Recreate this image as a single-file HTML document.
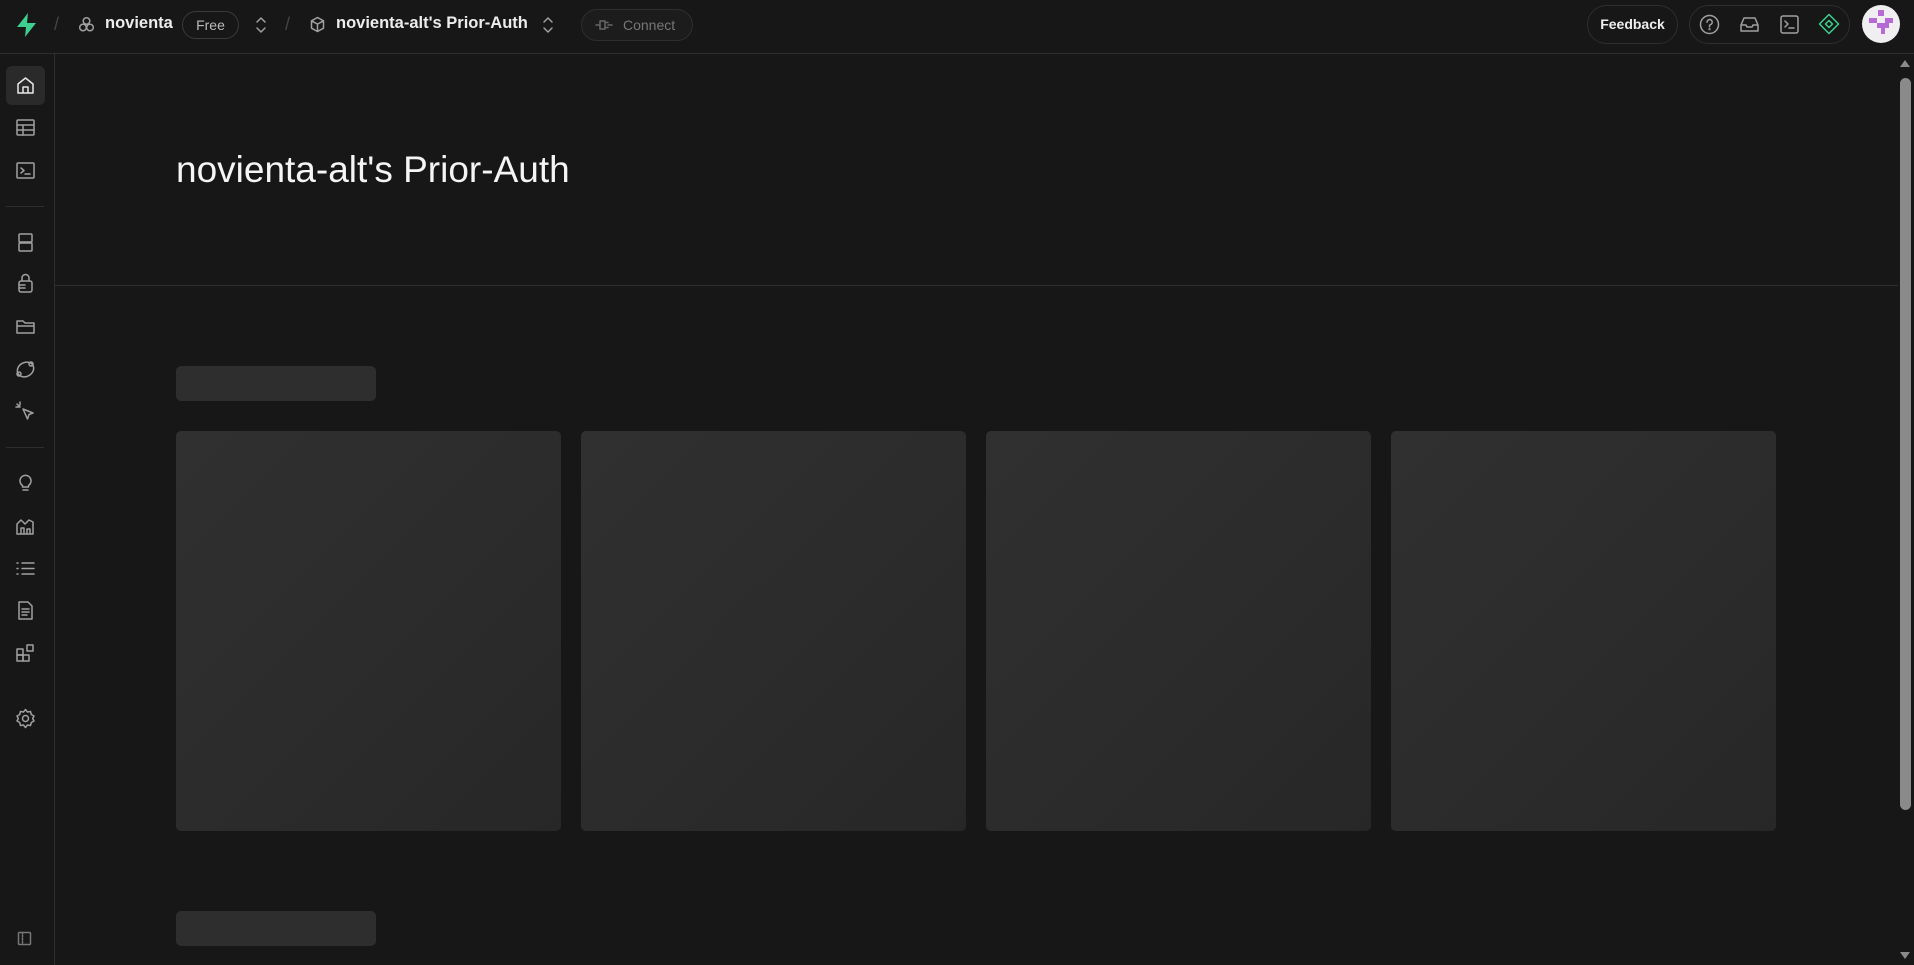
<!DOCTYPE html>
<html><head><meta charset="utf-8"><style>
*{box-sizing:border-box;margin:0;padding:0}
body{width:1914px;height:965px;background:#171717;font-family:"Liberation Sans",sans-serif;color:#ededed;position:relative;overflow:hidden}
.top{position:absolute;left:0;top:0;width:1914px;height:54px;border-bottom:1px solid #2e2e2e}
.abs{position:absolute}
.side{position:absolute;left:0;top:54px;width:55px;height:911px;border-right:1px solid #2e2e2e}
svg.i{position:absolute;fill:none;stroke:#a0a0a0;stroke-width:1.5;stroke-linecap:round;stroke-linejoin:round}
.sep{position:absolute;left:6px;width:38px;height:1px;background:#2e2e2e}
.card{position:absolute;top:431px;width:385px;height:400px;border-radius:5px;background:linear-gradient(135deg,#303030 0%,#2c2c2c 50%,#272727 100%)}
.bar{position:absolute;left:176px;width:200px;height:35px;border-radius:5px;background:#2e2e2e}
</style></head><body>
<div class="top">
<svg class="abs" style="left:15px;top:13px" width="23" height="24" viewBox="0 0 23 24"><path d="M13 0 L2 14 H11 L10 24 L21 10 H12 Z" fill="#3ecf8e"/></svg>
<div class="abs" style="left:54px;top:14px;color:#444;font-size:18px">/</div>
<svg class="i" style="left:78px;top:16px" width="17" height="17" viewBox="0 0 17 17" ><circle cx="8.5" cy="5" r="3.3"/><circle cx="5" cy="11.5" r="3.3"/><circle cx="12" cy="11.5" r="3.3"/></svg>
<div class="abs" style="left:105px;top:14px;font-size:16.5px;font-weight:bold">novienta</div>
<div class="abs" style="left:182px;top:11px;width:57px;height:28px;border:1px solid #3a3a3a;border-radius:14px;font-size:14px;color:#bbb;text-align:center;line-height:26px">Free</div>
<svg class="i" style="left:254px;top:16px" width="14" height="18" viewBox="0 0 14 18"><path d="M3 6l4-4 4 4M3 12l4 4 4-4"/></svg>
<div class="abs" style="left:285px;top:14px;color:#444;font-size:18px">/</div>
<svg class="i" style="left:309px;top:16px" width="17" height="17" viewBox="0 0 17 17"><path d="M8.5 1.5l6 3.3v7.4l-6 3.3-6-3.3V4.8zM2.5 4.8l6 3.3 6-3.3M8.5 8.1v7.4"/></svg>
<div class="abs" style="left:336px;top:14px;font-size:16.5px;font-weight:bold">novienta-alt's Prior-Auth</div>
<svg class="i" style="left:541px;top:16px" width="14" height="18" viewBox="0 0 14 18"><path d="M3 6l4-4 4 4M3 12l4 4 4-4"/></svg>
<div class="abs" style="left:581px;top:9px;width:112px;height:32px;border:1px solid #2e2e2e;background:#1c1c1c;border-radius:16px;font-size:14px;color:#777;line-height:30px;padding-left:41px">Connect</div>
<svg class="i" style="left:595px;top:18px;stroke:#666" width="18" height="14" viewBox="0 0 18 14"><path d="M1 7h4M13 7h4M5 3h5v8H5zM10 4.5h3M10 9.5h3"/></svg>
<div class="abs" style="left:1587px;top:5px;width:91px;height:39px;border:1px solid #2e2e2e;border-radius:20px;font-size:14px;font-weight:bold;text-align:center;line-height:37px">Feedback</div>
<div class="abs" style="left:1689px;top:5px;width:161px;height:39px;border:1px solid #2e2e2e;border-radius:20px"></div>
<svg class="i" style="left:1699px;top:14px" width="21" height="21" viewBox="0 0 21 21"><circle cx="10.5" cy="10.5" r="9"/><path d="M8 8.2a2.6 2.6 0 1 1 3.5 2.4c-.7.3-1 .8-1 1.5v.6"/><circle cx="10.5" cy="15.2" r=".4"/></svg>
<svg class="i" style="left:1739px;top:14px" width="21" height="21" viewBox="0 0 21 21"><path d="M2 11l3-7h11l3 7v6H2zM2 11h5l1 2h5l1-2h5"/></svg>
<svg class="i" style="left:1779px;top:14px" width="21" height="21" viewBox="0 0 21 21"><rect x="2" y="2" width="17" height="17" rx="2"/><path d="M6 7l3 3-3 3M10 14h5"/></svg>
<svg class="i" style="left:1818px;top:13px;stroke:#3ecf8e" width="22" height="22" viewBox="0 0 22 22"><path d="M11 1.5l9.5 9.5-9.5 9.5-9.5-9.5z"/><path d="M11 7.5l3.5 3.5-3.5 3.5-3.5-3.5z"/></svg>
<svg class="abs" style="left:1862px;top:5px" width="38" height="38" viewBox="0 0 38 38"><circle cx="19" cy="19" r="19" fill="#f0eef0"/><path d="M16 5h6v6h-6zM7 13h8v5h8v-5h8v5h-4v5h-4v6h-4v-6h-4v-5H7z" fill="#b56ad6"/></svg>
</div>
<div class="side">
<div class="abs" style="left:6px;top:12px;width:39px;height:39px;border-radius:6px;background:#2a2a2a"></div>
<svg class="i" style="left:15px;top:21px;stroke:#e8e8e8" width="21" height="21" viewBox="0 0 21 21"><path d="M3 9l7.5-6 7.5 6v9H3zM8 18v-6h5v6"/></svg>
<svg class="i" style="left:15px;top:63px" width="21" height="21" viewBox="0 0 21 21"><rect x="2" y="3" width="17" height="15" rx="1"/><path d="M2 8h17M2 13h17M8 8v10"/></svg>
<svg class="i" style="left:15px;top:106px" width="21" height="21" viewBox="0 0 21 21"><rect x="2" y="3" width="17" height="15" rx="1"/><path d="M6 8l3 2.5-3 2.5M10 14h5"/></svg>
<div class="sep" style="top:152px"></div>
<svg class="i" style="left:15px;top:178px" width="21" height="21" viewBox="0 0 21 21"><rect x="4" y="2" width="13" height="8" rx="1"/><rect x="4" y="11" width="13" height="8" rx="1"/></svg>
<svg class="i" style="left:15px;top:219px" width="21" height="21" viewBox="0 0 21 21"><path d="M7 8V5a3.5 3.5 0 0 1 7 0v3"/><rect x="4" y="8" width="13" height="11" rx="2"/><path d="M4 12h6M4 15h6"/></svg>
<svg class="i" style="left:15px;top:262px" width="21" height="21" viewBox="0 0 21 21"><path d="M2 17V5h6l2 2h9v10zM2 10h17"/></svg>
<svg class="i" style="left:15px;top:305px" width="21" height="21" viewBox="0 0 21 21"><ellipse cx="10.5" cy="10.5" rx="8.5" ry="7" transform="rotate(-30 10.5 10.5)"/><circle cx="4" cy="15" r="2"/><circle cx="16" cy="5" r="2"/></svg>
<svg class="i" style="left:15px;top:347px" width="21" height="21" viewBox="0 0 21 21"><path d="M8 8l10 4-4 1.5-1.5 4.5zM2 3l3 3M5 1v3M1 6h3"/></svg>
<div class="sep" style="top:393px"></div>
<svg class="i" style="left:15px;top:418px" width="21" height="21" viewBox="0 0 21 21"><path d="M7.5 13.5a5.5 5.5 0 1 1 6 0V15h-6zM8 18h5"/></svg>
<svg class="i" style="left:15px;top:461px" width="21" height="21" viewBox="0 0 21 21"><path d="M2 19V9l4-4 4 4 4-4 4 2v12zM6 19v-6h3v6M12 19v-5h3v5"/></svg>
<svg class="i" style="left:15px;top:504px" width="21" height="21" viewBox="0 0 21 21"><path d="M7 5h12M7 10.5h12M7 16h12M2 5h1M2 10.5h1M2 16h1"/></svg>
<svg class="i" style="left:15px;top:546px" width="21" height="21" viewBox="0 0 21 21"><path d="M4 2h9l4 4v13H4zM7 9h7M7 12h7M7 15h5"/></svg>
<svg class="i" style="left:15px;top:589px" width="21" height="21" viewBox="0 0 21 21"><rect x="2" y="6" width="6" height="6"/><rect x="2" y="12" width="6" height="6"/><rect x="8" y="12" width="6" height="6"/><rect x="12" y="2" width="6" height="6"/></svg>
<svg class="i" style="left:15px;top:654px" width="21" height="21" viewBox="0 0 21 21"><circle cx="10.5" cy="10.5" r="3"/><path d="M10.5 1.5l2 2.5 3-.5.8 3 2.7 1.5-1.3 2.5 1.3 2.5-2.7 1.5-.8 3-3-.5-2 2.5-2-2.5-3 .5-.8-3L2 13l1.3-2.5L2 8l2.7-1.5.8-3 3 .5z"/></svg>
<svg class="i" style="left:17px;top:877px;stroke:#777" width="15" height="15" viewBox="0 0 15 15"><rect x="1.5" y="1.5" width="12" height="12" rx="1"/><path d="M5.5 1.5v12" stroke-dasharray="1.5 1.5"/></svg>
</div>
<div class="abs" style="left:176px;top:149px;font-size:37px;color:#f5f5f5;letter-spacing:0px">novienta-alt's Prior-Auth</div>
<div class="abs" style="left:55px;top:285px;width:1843px;height:1px;background:#2e2e2e"></div>
<div class="bar" style="top:366px"></div>
<div class="card" style="left:176px"></div>
<div class="card" style="left:581px"></div>
<div class="card" style="left:986px"></div>
<div class="card" style="left:1391px"></div>
<div class="bar" style="top:911px"></div>
<div class="abs" style="left:1898px;top:54px;width:16px;height:911px;background:#171717"></div>
<div class="abs" style="left:1900px;top:78px;width:11px;height:732px;border-radius:6px;background:#8a8a8a"></div>
<div class="abs" style="left:1900px;top:60px;width:0;height:0;border-left:5px solid transparent;border-right:5px solid transparent;border-bottom:7px solid #8a8a8a"></div>
<div class="abs" style="left:1900px;top:952px;width:0;height:0;border-left:5px solid transparent;border-right:5px solid transparent;border-top:7px solid #8a8a8a"></div>
</body></html>
